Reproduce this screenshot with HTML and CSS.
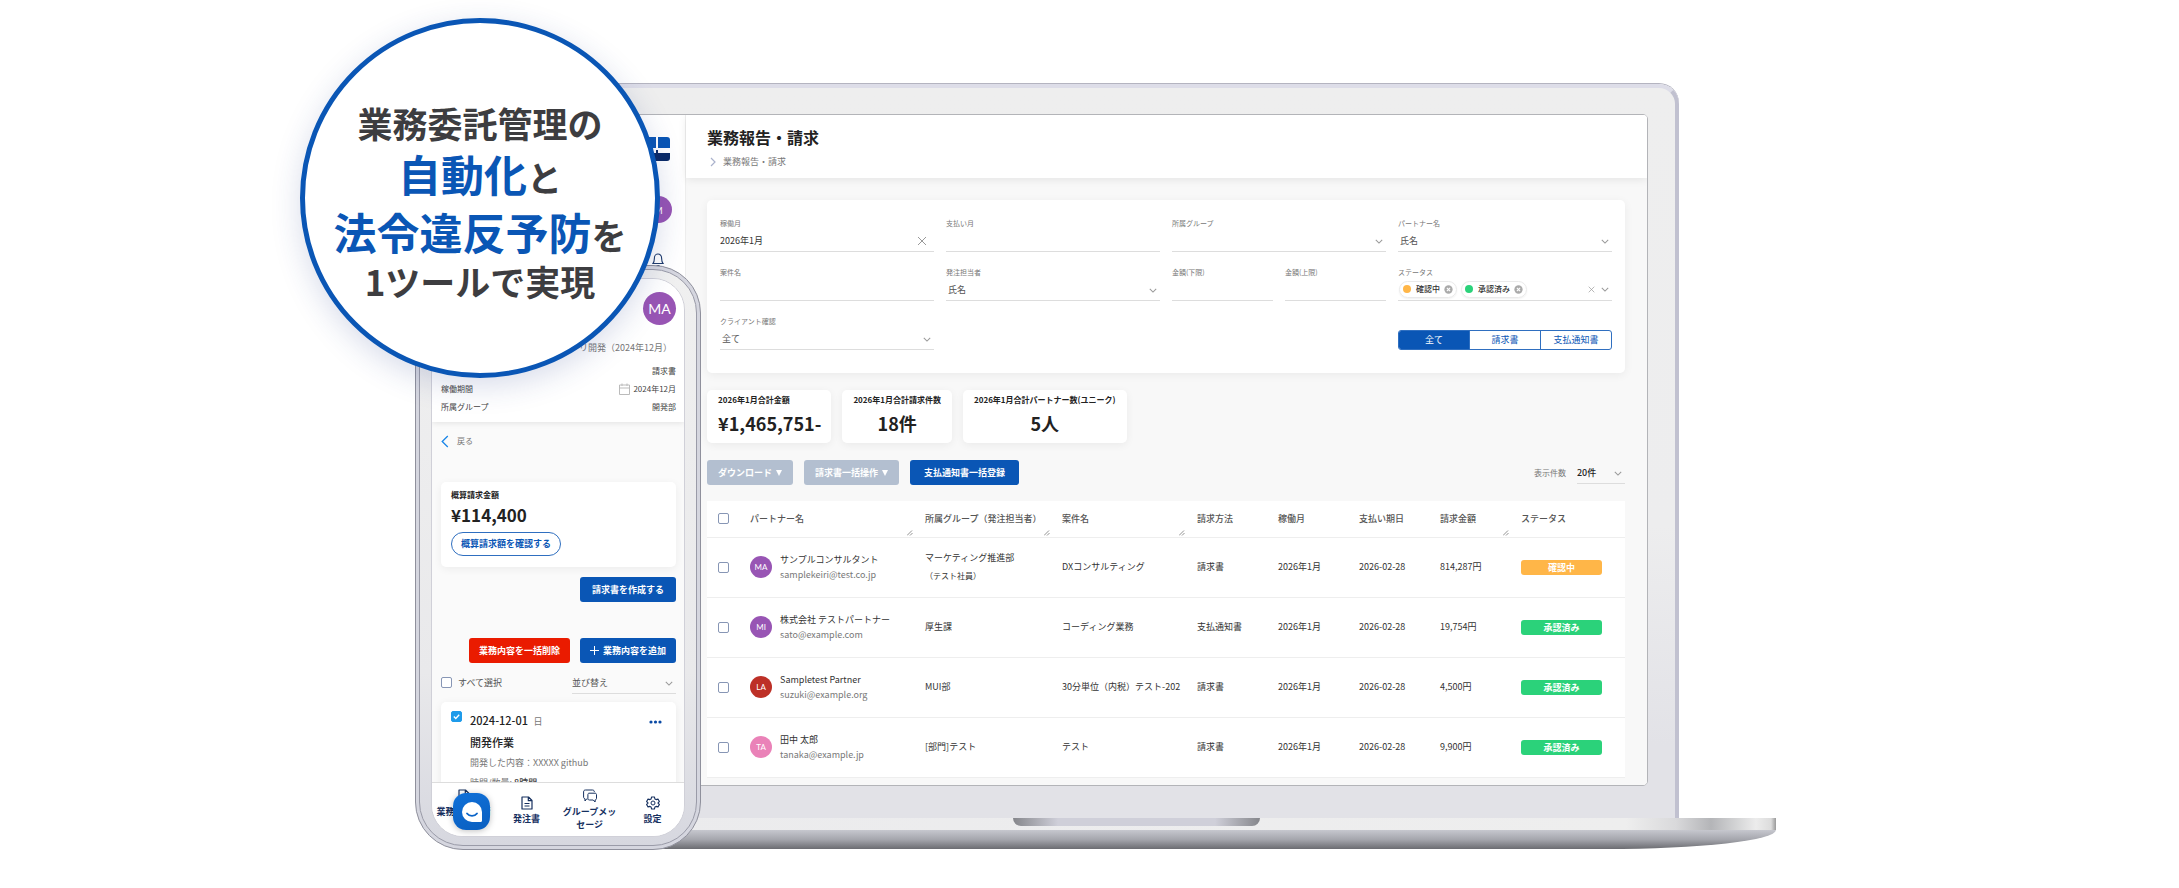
FILE: index.html
```html
<!DOCTYPE html>
<html lang="ja">
<head>
<meta charset="utf-8">
<meta name="viewport" content="width=device-width, initial-scale=1">
<title>業務報告・請求</title>
<link rel="stylesheet" href="styles.css">
</head>
<body>
<svg class="sprite" aria-hidden="true">
  <symbol id="chev" viewBox="0 0 10 6"><path d="M1 1l4 4 4-4" fill="none" stroke="currentColor" stroke-width="1.300"/></symbol>
  <symbol id="cross" viewBox="0 0 10 10"><path d="M1 1l8 8M9 1l-8 8" fill="none" stroke="currentColor"/></symbol>
  <symbol id="remove" viewBox="0 0 10 10"><circle cx="5" cy="5" r="4.600" fill="#aaa"/><path d="M3.200 3.200l3.600 3.600M6.800 3.200l-3.600 3.600" stroke="#fff" stroke-width="1.200"/></symbol>
  <symbol id="grip" viewBox="0 0 6 6"><path d="M0 5.500L5 .5M3 5.500L5.500 3" fill="none" stroke="#777" stroke-width=".8"/></symbol>
  <symbol id="doc" viewBox="0 0 12 14"><path d="M1 1h6.500L11 4.500V13H1zM7.300 1v3.700H11M3.500 7.500h5M3.500 10h5" fill="none" stroke="currentColor" stroke-width="1.200" stroke-linejoin="round"/></symbol>
</svg>
<main class="scene">
  <section class="laptop">
    <div class="lid">
      <div class="screen">
        <nav class="side">
          <svg class="logo" viewBox="0 0 24 24"><path d="M0 3a3 3 0 0 1 3-3h7v11H0zM12 0h9a3 3 0 0 1 3 3v8H12z" fill="#0a56b5"/><path d="M0 16h10v-3h2v3h12v5a3 3 0 0 1-3 3H3a3 3 0 0 1-3-3z" fill="#0a2a66"/></svg>
          <span class="avatar side-avatar">M</span>
          <svg class="bell" viewBox="0 0 12 14"><path d="M1 10.500h10C9.700 9.300 9.700 7.500 9.600 5A3.600 4 0 0 0 2.400 5C2.300 7.500 2.300 9.300 1 10.500zM4.500 12.500h3" fill="none" stroke="#1d3a6b" stroke-width="1.100"/></svg>
        </nav>
        <div class="app">
          <header class="app-head">
            <h1>業務報告・請求</h1>
            <p class="crumb"><svg viewBox="0 0 6 10"><path d="M1 1l4 4-4 4" fill="none" stroke="#aab2cc" stroke-width="1.200"/></svg>業務報告・請求</p>
          </header>
          <div class="content">
            <form class="filters">
              <div class="field"><label for="month">稼働月</label><div class="control"><input id="month" type="text" value="2026年1月"><button type="button" class="clear" aria-label="クリア"><svg class="i-cross"><use href="#cross"/></svg></button></div></div>
              <div class="field"><label for="pay">支払い月</label><div class="control"><input id="pay" type="text"></div></div>
              <div class="field"><label for="group">所属グループ</label><div class="control"><select id="group"><option></option></select><svg class="i-chev"><use href="#chev"/></svg></div></div>
              <div class="field"><label for="partner">パートナー名</label><div class="control"><select id="partner" class="muted"><option>氏名</option></select><svg class="i-chev"><use href="#chev"/></svg></div></div>
              <div class="field"><label for="case">案件名</label><div class="control"><input id="case" type="text"></div></div>
              <div class="field"><label for="owner">発注担当者</label><div class="control"><select id="owner" class="muted"><option>氏名</option></select><svg class="i-chev"><use href="#chev"/></svg></div></div>
              <div class="pair">
                <div class="field"><label for="min">金額(下限)</label><div class="control"><input id="min" type="text"></div></div>
                <div class="field"><label for="max">金額(上限)</label><div class="control"><input id="max" type="text"></div></div>
              </div>
              <div class="field"><span class="label">ステータス</span><div class="control chips">
                <span class="chip"><i class="dot amber"></i>確認中<button type="button" aria-label="確認中を外す"><svg><use href="#remove"/></svg></button></span>
                <span class="chip"><i class="dot green"></i>承認済み<button type="button" aria-label="承認済みを外す"><svg><use href="#remove"/></svg></button></span>
                <button type="button" class="clear small" aria-label="クリア"><svg class="i-cross"><use href="#cross"/></svg></button><svg class="i-chev"><use href="#chev"/></svg></div></div>
              <div class="field"><label for="client">クライアント確認</label><div class="control"><select id="client" class="muted"><option>全て</option></select><svg class="i-chev"><use href="#chev"/></svg></div></div>
              <div class="segment"><button type="button" class="on">全て</button><button type="button">請求書</button><button type="button">支払通知書</button></div>
            </form>
            <div class="stats">
              <div class="stat"><h2>2026年1月合計金額</h2><p>¥1,465,751-</p></div>
              <div class="stat"><h2>2026年1月合計請求件数</h2><p>18件</p></div>
              <div class="stat"><h2>2026年1月合計パートナー数(ユニーク)</h2><p>5人</p></div>
            </div>
            <div class="tools">
              <button type="button" class="btn gray">ダウンロード<svg viewBox="0 0 6 6"><path d="M0 0h6L3 6z" fill="#fff"/></svg></button>
              <button type="button" class="btn gray">請求書一括操作<svg viewBox="0 0 6 6"><path d="M0 0h6L3 6z" fill="#fff"/></svg></button>
              <button type="button" class="btn wide">支払通知書一括登録</button>
              <label class="per-label" for="per">表示件数</label>
              <div class="control per"><select id="per"><option>20件</option></select><svg class="i-chev"><use href="#chev"/></svg></div>
            </div>
            <table class="list">
              <colgroup><col class="c1"><col class="c2"><col class="c3"><col class="c4"><col class="c5"><col class="c5"><col class="c5"><col class="c5"><col class="c6"></colgroup>
              <thead><tr>
                <th><input type="checkbox" aria-label="すべて選択"></th>
                <th>パートナー名<svg class="grip"><use href="#grip"/></svg></th>
                <th>所属グループ（発注担当者）<svg class="grip"><use href="#grip"/></svg></th>
                <th>案件名<svg class="grip"><use href="#grip"/></svg></th>
                <th>請求方法</th><th>稼働月</th><th>支払い期日</th>
                <th>請求金額<svg class="grip"><use href="#grip"/></svg></th>
                <th>ステータス</th>
              </tr></thead>
              <tbody>
                <tr><td><input type="checkbox" aria-label="サンプルコンサルタント"></td><td><div class="who"><span class="avatar">MA</span><div><b>サンプルコンサルタント</b><small>samplekeiri@test.co.jp</small></div></div></td><td>マーケティング推進部<span class="sub">（テスト社員）</span></td><td>DXコンサルティング</td><td>請求書</td><td>2026年1月</td><td>2026-02-28</td><td>814,287円</td><td><span class="tag amber">確認中</span></td></tr>
                <tr><td><input type="checkbox" aria-label="株式会社 テストパートナー"></td><td><div class="who"><span class="avatar">MI</span><div><b>株式会社 テストパートナー</b><small>sato@example.com</small></div></div></td><td>厚生課</td><td>コーディング業務</td><td>支払通知書</td><td>2026年1月</td><td>2026-02-28</td><td>19,754円</td><td><span class="tag green">承認済み</span></td></tr>
                <tr><td><input type="checkbox" aria-label="Sampletest Partner"></td><td><div class="who"><span class="avatar red">LA</span><div><b>Sampletest Partner</b><small>suzuki@example.org</small></div></div></td><td>MUI部</td><td>30分単位（内税）テスト-202</td><td>請求書</td><td>2026年1月</td><td>2026-02-28</td><td>4,500円</td><td><span class="tag green">承認済み</span></td></tr>
                <tr><td><input type="checkbox" aria-label="田中 太郎"></td><td><div class="who"><span class="avatar pink">TA</span><div><b>田中 太郎</b><small>tanaka@example.jp</small></div></div></td><td>[部門]テスト</td><td>テスト</td><td>請求書</td><td>2026年1月</td><td>2026-02-28</td><td>9,900円</td><td><span class="tag green">承認済み</span></td></tr>
              </tbody>
            </table>
          </div>
        </div>
      </div>
    </div>
    <div class="deck"><span class="notch"></span></div>
    <div class="under"></div>
  </section>

  <section class="phone">
    <div class="bezel"><div class="display">
      <header class="m-head">
        <span class="avatar m-avatar">MA</span>
        <p class="m-title">リ開発（2024年12月）</p>
        <p class="m-row"><span></span><span>請求書</span></p>
        <p class="m-row"><span>稼働期間</span><span class="date"><svg viewBox="0 0 11 12"><path d="M.5 2h10v9.500H.5zM.5 5h10M3 .5V3M8 .5V3" fill="none" stroke="#bbb"/></svg>2024年12月</span></p>
        <p class="m-row"><span>所属グループ</span><span>開発部</span></p>
      </header>
      <div class="m-body">
        <a class="back" href="#"><svg viewBox="0 0 8 14"><path d="M7 1L1 7l6 6" fill="none" stroke="#1a86e8" stroke-width="1.400"/></svg>戻る</a>
        <div class="m-card">
          <h2>概算請求金額</h2>
          <p class="sum">¥114,400</p>
          <button type="button" class="pill">概算請求額を確認する</button>
        </div>
        <button type="button" class="btn make">請求書を作成する</button>
        <div class="m-actions">
          <button type="button" class="btn danger">業務内容を一括削除</button>
          <button type="button" class="btn"><svg class="plus" viewBox="0 0 9 9"><path d="M4.500 0v9M0 4.500h9" stroke="#fff"/></svg>業務内容を追加</button>
        </div>
        <div class="m-select">
          <label><input type="checkbox">すべて選択</label>
          <div class="control sort"><select class="muted" aria-label="並び替え"><option>並び替え</option></select><svg class="i-chev"><use href="#chev"/></svg></div>
        </div>
        <article class="task">
          <input type="checkbox" checked aria-label="開発作業">
          <div class="task-text">
            <p class="day">2024-12-01 <span>日</span></p>
            <h3>開発作業</h3>
            <p>開発した内容：XXXXX github</p>
            <p>時間/数量: <strong>8時間</strong></p>
          </div>
          <button type="button" class="more" aria-label="メニュー"><svg viewBox="0 0 13 4"><g fill="#0a4aa5"><circle cx="2" cy="2" r="1.600"/><circle cx="6.500" cy="2" r="1.600"/><circle cx="11" cy="2" r="1.600"/></g></svg></button>
        </article>
      </div>
      <nav class="tabs">
        <a href="#"><svg><use href="#doc"/></svg>業務報告・請求</a>
        <a href="#"><svg><use href="#doc"/></svg>発注書</a>
        <a href="#"><svg viewBox="0 0 14 14"><path d="M4.500 10H3.500L2 12V9.800C.8 9.500.6 8.800.6 8V3C.6 1.700 1.200 1 2.500 1h7C10.700 1 11.300 1.700 11.300 3M6 4.200h6c1 0 1.500.6 1.500 1.500v3.600c0 .9-.4 1.500-1.400 1.600V13l-1.900-2H6.500c-1 0-1.600-.6-1.600-1.500V5.700c0-.9.400-1.500 1.100-1.500z" fill="none" stroke="currentColor" stroke-linejoin="round"/></svg>グループメッセージ</a>
        <a href="#"><svg viewBox="0 0 14 14"><path d="M5.600 1h2.800l.5 1.900 1.200.7 1.900-.5 1.400 2.400L12 6.800v.4l1.400 1.300-1.400 2.400-1.900-.5-1.200.7-.5 1.900H5.600l-.5-1.900-1.200-.7-1.900.5L.6 8.500 2 7.200v-.4L.6 5.500 2 3.100l1.900.5 1.200-.7z" fill="none" stroke="currentColor" stroke-width="1.100" stroke-linejoin="round"/><circle cx="7" cy="7" r="2" fill="none" stroke="currentColor"/></svg>設定</a>
      </nav>
      <button type="button" class="chat" aria-label="チャット"><svg viewBox="0 0 20 20"><path d="M10 0a10 10 0 0 1 10 10v8.500a1.500 1.500 0 0 1-1.500 1.500H10a10 10 0 0 1 0-20z" fill="#fff"/><path d="M5 11.500c2.500 3.200 7.500 3.200 10 0" fill="none" stroke="#0a64c8" stroke-width="1.800" stroke-linecap="round"/></svg></button>
    </div></div>
  </section>

  <section class="badge">
    <p class="lead">業務委託管理の</p>
    <p class="big"><em>自動化</em>と</p>
    <p class="big"><em>法令違反予防</em>を</p>
    <p>1ツールで実現</p>
  </section>
</main>
</body>
</html>
```
FILE: styles.css
```css
* { box-sizing: border-box; }
body, h1, h2, h3, p { margin: 0; }
body {
  background: #fff;
  color: #333;
  font: 9px/12px "Noto Sans CJK JP", sans-serif;
  padding: 18px 18.5% 18px 13.77%;
}
button, input, select { font: inherit; color: inherit; border: 0; margin: 0; padding: 0; background: none; }
button { white-space: nowrap; }
svg { display: block; flex: none; }
a { color: inherit; text-decoration: none; }
.sprite { position: absolute; width: 0; height: 0; }
.scene { position: relative; }

/* laptop */
.laptop { padding: 66px 0 0 198px; }
.lid {
  margin: 0 97px 0 98px;
  padding: 26px 27px 32px 26px;
  border: 4px solid #c1c1d0;
  border-top-color: #dddde8;
  border-bottom: 0;
  border-radius: 20px 20px 0 0;
  background: linear-gradient(#eee 0%, #ededee 60%, #e2e2e7 90%);
  box-shadow: 0 -1px 0 #b4b4c0;
}
.screen { display: flex; border: 1px solid #b3b4b8; border-radius: 5px; background: #fff; overflow: hidden; }
.side { width: 59px; flex: none; padding: 22px 0 0 4px; display: flex; flex-direction: column; align-items: center; border-right: 1px solid #eee; }
.logo { width: 24px; height: 24px; }
.side-avatar { margin-top: 35px; }
.bell { width: 12px; height: 14px; margin-top: 30px; }
.app { flex: 1; min-width: 0; background: #f8f8f8; }
.app-head { padding: 10px 21px 8px; background: #fff; box-shadow: 0 2px 8px rgba(0,0,0,.08); }
h1 { font-size: 16px; line-height: 24px; color: #222; }
.crumb { display: flex; align-items: center; gap: 7px; margin-top: 5px; padding-left: 3px; line-height: 16px; color: #777; }
.crumb svg { width: 6px; height: 10px; }
.content { padding: 22px 22px 7px 21px; }
.filters { display: grid; grid-template-columns: repeat(4, 1fr); gap: 14px 12px; padding: 17px 13px 23px; background: #fff; border-radius: 5px; box-shadow: 0 2px 10px rgba(0,0,0,.06); }
.field label, .label { display: block; font-size: 7px; line-height: 12px; color: #777; }
.control { position: relative; display: flex; align-items: center; height: 23px; padding-top: 2px; border-bottom: 1px solid #ddd; }
.control input, .control select { width: 100%; min-width: 0; appearance: none; outline: 0; color: #333; }
.control select { padding-left: 2px; }
.control .muted { color: #555; }
.i-chev { position: absolute; right: 3px; width: 8px; height: 5px; color: #999; pointer-events: none; }
.clear { margin-right: 7px; }
.i-cross { width: 10px; height: 10px; color: #999; }
.clear.small { margin: 0 17px 0 auto; }
.small .i-cross { width: 7px; height: 7px; }
.pair { display: grid; grid-template-columns: 1fr 1fr; gap: 12px; }
.chips { gap: 4px; padding: 0 0 0 1px; }
.chip { display: flex; align-items: center; height: 17px; padding: 0 3px; border: 1px solid #eaeaea; border-radius: 9px; font-size: 8px; font-weight: 500; white-space: nowrap; box-shadow: 0 1px 2px rgba(0,0,0,.06); }
.chip svg { width: 9px; height: 9px; margin-left: 4px; }
.dot { width: 8px; height: 8px; margin-right: 5px; border-radius: 50%; }
.amber { background: #ffb648; }
.green { background: #2bd27a; }
.segment { grid-column: 4; align-self: end; display: flex; height: 20px; border: 1px solid #2f6fc0; border-radius: 3px; overflow: hidden; }
.segment button { flex: 1 1 0; color: #0a56b5; border-left: 1px solid #2f6fc0; }
.segment .on { background: #0a56b5; color: #fff; border-left: 0; }
.stats { display: flex; gap: 11px; margin-top: 17px; }
.stat { padding: 4px 11px 7px; background: #fff; border-radius: 5px; box-shadow: 0 2px 8px rgba(0,0,0,.06); text-align: center; color: #222; }
.stat:first-child { padding-right: 10px; text-align: left; }
.stat h2 { font-size: 8px; line-height: 12px; }
.stat p { margin-top: 4px; font-size: 18px; line-height: 26px; font-weight: 700; }
.tools { display: flex; align-items: center; gap: 11px; margin-top: 17px; }
.btn { display: flex; align-items: center; justify-content: center; gap: 4px; height: 25px; padding: 0 12px; border-radius: 3px; background: #0a56b5; color: #fff; font-weight: 700; }
.btn.gray { padding: 0 11px; background: #b3bfd0; }
.btn.gray svg { width: 6px; height: 6px; }
.btn.wide { padding: 0 14px; }
.per-label { margin-left: auto; font-size: 8px; color: #777; }
.per { width: 48px; }
.per select { padding: 0; font-weight: 500; color: #222; }
.list { width: 100%; margin-top: 16px; border-collapse: collapse; table-layout: fixed; background: #fff; }
.c1 { width: 32px; } .c2 { width: 175px; } .c3 { width: 137px; } .c4 { width: 135px; } .c5 { width: 81px; }
.list th, .list td { padding: 0 0 0 11px; text-align: left; border-bottom: 1px solid #eee; white-space: nowrap; }
.list th { position: relative; height: 36px; font-weight: 500; color: #555; }
.list td { height: 60px; overflow: hidden; }
.grip { position: absolute; right: 1px; bottom: 1px; width: 6px; height: 6px; }
input[type="checkbox"] { display: block; appearance: none; flex: none; width: 11px; height: 11px; border: 1px solid #8796b5; border-radius: 2px; background: #fff; }
.who { display: flex; align-items: center; gap: 8px; }
.who b, .who small, .sub { display: block; font-weight: 400; font-size: 9px; line-height: 15px; }
.who small { color: #777; }
.sub { margin-top: 4px; font-size: 8px; }
.avatar { display: grid; place-items: center; flex: none; width: 22px; height: 22px; border-radius: 50%; background: #9855b4; color: #fff; font: 8px/10px Lato, sans-serif; }
.avatar.side-avatar { width: 27px; height: 27px; font-size: 10px; }
.avatar.red { background: #bd3027; }
.avatar.pink { background: #ea82b8; }
.tag { display: block; width: 81px; border-radius: 3px; color: #fff; font-weight: 700; line-height: 15px; text-align: center; }

.deck { height: 12px; background: linear-gradient(90deg, #999 0, #ebebed 120px, #eee calc(100% - 150px), #d9d9db calc(100% - 100px), #b4b5b8 calc(100% - 65px), #ececec calc(100% - 20px), #dcdcdc calc(100% - 5px), #999 100%); }
.notch { display: block; width: 247px; height: 8px; margin: 0 auto; border-radius: 0 0 12px 12px; background: linear-gradient(90deg, #85868b, #cfcfd9 45px, #cfcfd9 calc(100% - 45px), #85868b); }
.under { height: 19px; border-radius: 0 0 170px 170px / 0 0 19px 19px; background: linear-gradient(#c6c7ce, #a5a6ad 50%, #6b6c71); }

/* phone */
.phone {
  position: absolute; left: 115px; top: 247px;
  width: 286px; height: 585px; padding: 3px;
  border: 1px solid #8f909c; border-radius: 48px;
  background: #d5d6df;
}
.bezel { height: 100%; padding: 8px 11px; border: 1px solid #9a9ba8; border-radius: 44px; background: linear-gradient(#f0f0f0, #e9e9eb 70%, #d6d7df); }
.display { position: relative; display: flex; flex-direction: column; height: 100%; border: 1px solid #d0d0d8; border-radius: 32px; overflow: hidden; background: #fafafa; }
.m-head { padding: 13px 8px 6px 9px; background: #fff; box-shadow: 0 1px 6px rgba(0,0,0,.1); color: #444; }
.avatar.m-avatar { width: 33px; height: 33px; margin-left: auto; font-size: 14px; }
.m-title { padding-right: 4px; margin: 15px 0 6px; line-height: 16px; text-align: right; color: #777; }
.m-row { display: flex; justify-content: space-between; font-size: 8px; line-height: 18px; }
.date { display: flex; align-items: center; gap: 3px; }
.date svg { width: 11px; height: 12px; }
.m-body { flex: 1; min-height: 0; overflow: hidden; padding: 12px 8px 0 9px; }
.back { display: flex; align-items: center; gap: 8px; height: 14px; color: #777; font-size: 8px; }
.back svg { width: 8px; height: 13px; }
.m-card { margin-top: 34px; padding: 7px 10px 11px; background: #fff; border-radius: 5px; box-shadow: 0 2px 8px rgba(0,0,0,.06); color: #222; }
.m-card h2 { font-size: 8px; line-height: 12px; }
.sum { margin: 1px 0 5px; font-size: 17px; line-height: 25px; font-weight: 700; }
.pill { height: 24px; padding: 0 9px; border: 1px solid #2f6fc0; border-radius: 12px; color: #0a56b5; font-weight: 700; }
.make { margin: 10px 0 36px auto; }
.m-actions { display: flex; justify-content: flex-end; gap: 10px; }
.m-actions .btn { padding: 0 10px; }
.m-actions .danger { background: #ea1b00; }
.plus { width: 9px; height: 9px; }
.m-select { display: flex; align-items: center; justify-content: space-between; margin: 8px 0 8px; }
.m-select label { display: flex; align-items: center; gap: 6px; color: #555; }
.sort { width: 104px; }
.sort select { padding: 0; }
.task { display: flex; align-items: flex-start; padding: 9px 14px 10px 10px; background: #fff; border-radius: 5px; box-shadow: 0 2px 8px rgba(0,0,0,.07); color: #777; }
input[type="checkbox"]:checked { border-color: #1e9bea; background: #1e9bea url("data:image/svg+xml,%3Csvg xmlns='http://www.w3.org/2000/svg' viewBox='0 0 10 10'%3E%3Cpath d='M2 5l2.200 2.200L8 3' fill='none' stroke='white' stroke-width='1.500'/%3E%3C/svg%3E"); }
.task-text { flex: 1; margin-left: 8px; white-space: nowrap; }
.task-text p, .task-text h3 { line-height: 20px; }
.task-text .day { font-size: 11px; line-height: 18px; font-weight: 500; color: #222; }
.day span { margin-left: 3px; font-size: 9px; font-weight: 400; color: #777; }
.task-text h3 { font-size: 11px; font-weight: 500; color: #222; line-height: 22px; }
.task-text strong { font-weight: 500; color: #444; }
.more { margin-top: 9px; }
.more svg { width: 13px; height: 4px; }
.tabs { position: relative; display: grid; grid-template-columns: repeat(4, 1fr); align-items: center; height: 54px; border-top: 1px solid #ddd; background: #fff; color: #16305f; font-weight: 700; text-align: center; }
.tabs a { display: flex; flex-direction: column; align-items: center; gap: 2px; padding: 1px 4px 0; word-break: break-all; line-height: 13px; }
.tabs svg { width: 14px; height: 14px; }
.chat { position: absolute; left: 21px; bottom: 6px; display: grid; place-items: center; width: 37px; height: 37px; border-radius: 13px; background: linear-gradient(160deg, #1070d8, #0a5fc0); box-shadow: 0 1px 6px rgba(0,0,0,.25); }
.chat svg { width: 20px; height: 20px; }

/* headline circle */
.badge {
  position: absolute; left: 0; top: 0;
  width: 360px; height: 360px; padding-top: 8px;
  display: flex; flex-direction: column; align-items: center; justify-content: center;
  border: 5px solid #0a56b5; border-radius: 50%;
  background: #fff; color: #3d3d40;
  box-shadow: 0 8px 30px rgba(40,60,140,.18);
  font-size: 35px; line-height: 38px; font-weight: 700; white-space: nowrap;
}
.badge .lead { margin-bottom: 4px; }
.badge .big { line-height: 54px; }
.badge em { font-style: normal; font-size: 43px; color: #0a56b5; }
```
